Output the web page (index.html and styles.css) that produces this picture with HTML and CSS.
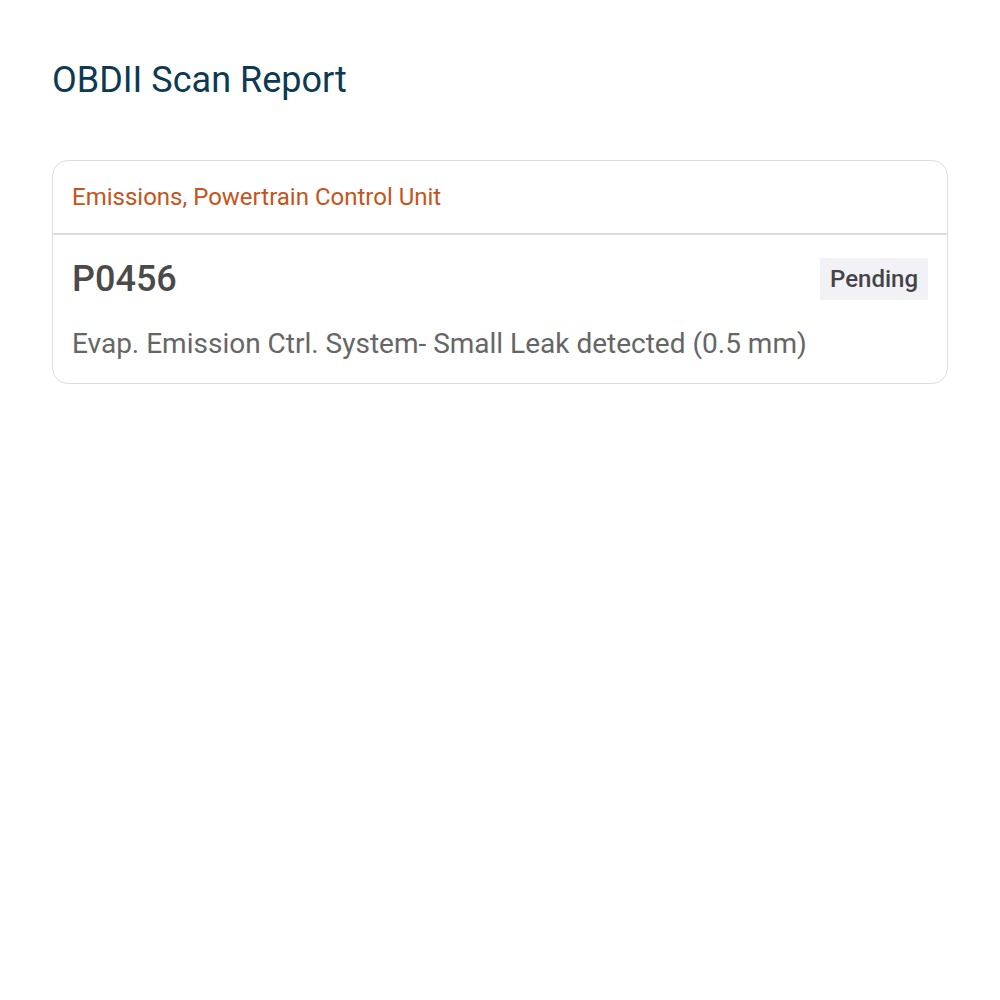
FILE: index.html
```html
<!DOCTYPE html>
<html lang="en">
<head>
<meta charset="utf-8">
<title>OBDII Scan Report</title>
<link rel="stylesheet" href="styles.css">
</head>
<body>
<main class="report">
  <h1 class="report-title">OBDII Scan Report</h1>
  <section class="module-card">
    <header class="module-header">Emissions, Powertrain Control Unit</header>
    <div class="dtc">
      <div class="dtc-top">
        <span class="dtc-code">P0456</span>
        <span class="dtc-status">Pending</span>
      </div>
      <p class="dtc-desc">Evap. Emission Ctrl. System- Small Leak detected (0.5 mm)</p>
    </div>
  </section>
</main>
</body>
</html>
```

FILE: styles.css
```css
html, body {
  margin: 0;
  padding: 0;
  background: #ffffff;
}

body {
  font-family: Roboto, "Liberation Sans", Arial, sans-serif;
}

.report {
  padding: 56px 52px;
}

.report-title {
  margin: 0 0 56px;
  font-size: 36px;
  font-weight: 400;
  line-height: 48px;
  color: #0d3a52;
}

.module-card {
  border: 1px solid #dcdcdc;
  border-radius: 16px;
  overflow: hidden;
}

.module-header {
  padding: 0 19px;
  height: 72px;
  display: flex;
  align-items: center;
  font-size: 24px;
  color: #c5541b;
  border-bottom: 2px solid #dcdcdc;
}

.dtc {
  padding: 23px 19px 21px 19px;
}

.dtc-top {
  display: flex;
  justify-content: space-between;
  align-items: center;
}

.dtc-code {
  font-size: 36px;
  font-weight: 500;
  color: #4a4a4a;
  line-height: 42px;
}

.dtc-status {
  background: #f2f2f6;
  color: #444448;
  font-size: 24px;
  font-weight: 500;
  line-height: 42px;
  padding: 0 10px;
}

.dtc-desc {
  margin: 26px 0 0;
  font-size: 28px;
  line-height: 36px;
  color: #666666;
}
```
